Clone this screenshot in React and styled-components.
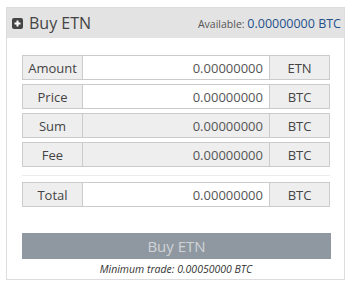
import styled, { createGlobalStyle } from 'styled-components';

const GlobalStyle = createGlobalStyle`
	body {
		margin: 0;
		background: #fff;
		font-family: 'Open Sans', 'Liberation Sans', sans-serif;
		color: #444;
	}
`;

const Panel = styled.div`
	margin: 7px 5px 0 6px;
	width: 337px;
	height: 271px;
	border: 1px solid #dcdcdc;
	display: flex;
	flex-direction: column;
`;

const Header = styled.div`
	height: 30px;
	background: #e3e3e3;
	display: flex;
	align-items: center;
	justify-content: space-between;
	padding: 0 3px 0 5px;
`;

const Title = styled.div`
	display: flex;
	align-items: center;
	gap: 6px;
	font-size: 16px;
	color: #444;
`;

const Available = styled.div`
	font-size: 10.5px;
	color: #555;
	padding-top: 1px;

	span {
		font-size: 12.5px;
		color: #24518a;
	}
`;

const Body = styled.div`
	padding: 17px 14px 0 15px;
	display: flex;
	flex-direction: column;
`;

const Row = styled.div`
	display: flex;
	height: 23px;
	border: 1px solid #cbcbcb;
	margin-bottom: 4px;
	font-size: 13px;
`;

const Label = styled.div`
	width: 59px;
	background: #eee;
	border-right: 1px solid #cbcbcb;
	display: flex;
	align-items: center;
	justify-content: center;
	color: #444;
`;

const Value = styled.div`
	flex: 1;
	background: ${(p) => (p.$readonly ? '#eee' : '#fff')};
	display: flex;
	align-items: center;
	justify-content: flex-end;
	padding-right: 6px;
	color: #555;
`;

const Unit = styled.div`
	width: 59px;
	background: #eee;
	border-left: 1px solid #cbcbcb;
	display: flex;
	align-items: center;
	justify-content: center;
	color: #444;
`;

const Divider = styled.div`
	height: 1px;
	background: #ececec;
	margin: 4px 0 6px;
`;

const BuyButton = styled.button`
	margin-top: 22px;
	height: 26px;
	width: 309px;
	border: none;
	background: #8f98a0;
	color: #d0d4d8;
	font-family: inherit;
	font-size: 15px;
	padding: 0;
`;

const MinTrade = styled.div`
	margin-top: 3px;
	text-align: center;
	font-size: 10.5px;
	font-style: italic;
	color: #333;
`;

const PlusIcon = () => (
	<svg width="11" height="11" viewBox="0 0 11 11">
		<rect x="0" y="0" width="11" height="11" rx="2" fill="#444" />
		<rect x="2.5" y="4.5" width="6" height="2" fill="#fff" />
		<rect x="4.5" y="2.5" width="2" height="6" fill="#fff" />
	</svg>
);

const fields = [
	{ label: 'Amount', unit: 'ETN' },
	{ label: 'Price', unit: 'BTC' },
	{ label: 'Sum', unit: 'BTC', readonly: true },
	{ label: 'Fee', unit: 'BTC', readonly: true },
];

function App() {
	return (
		<>
			<GlobalStyle />
			<Panel>
				<Header>
					<Title>
						<PlusIcon />
						Buy ETN
					</Title>
					<Available>
						Available: <span>0.00000000 BTC</span>
					</Available>
				</Header>
				<Body>
					{fields.map((f) => (
						<Row key={f.label}>
							<Label>{f.label}</Label>
							<Value $readonly={f.readonly}>0.00000000</Value>
							<Unit>{f.unit}</Unit>
						</Row>
					))}
					<Divider />
					<Row>
						<Label>Total</Label>
						<Value>0.00000000</Value>
						<Unit>BTC</Unit>
					</Row>
					<BuyButton>Buy ETN</BuyButton>
					<MinTrade>Minimum trade: 0.00050000 BTC</MinTrade>
				</Body>
			</Panel>
		</>
	);
}

export default App;
